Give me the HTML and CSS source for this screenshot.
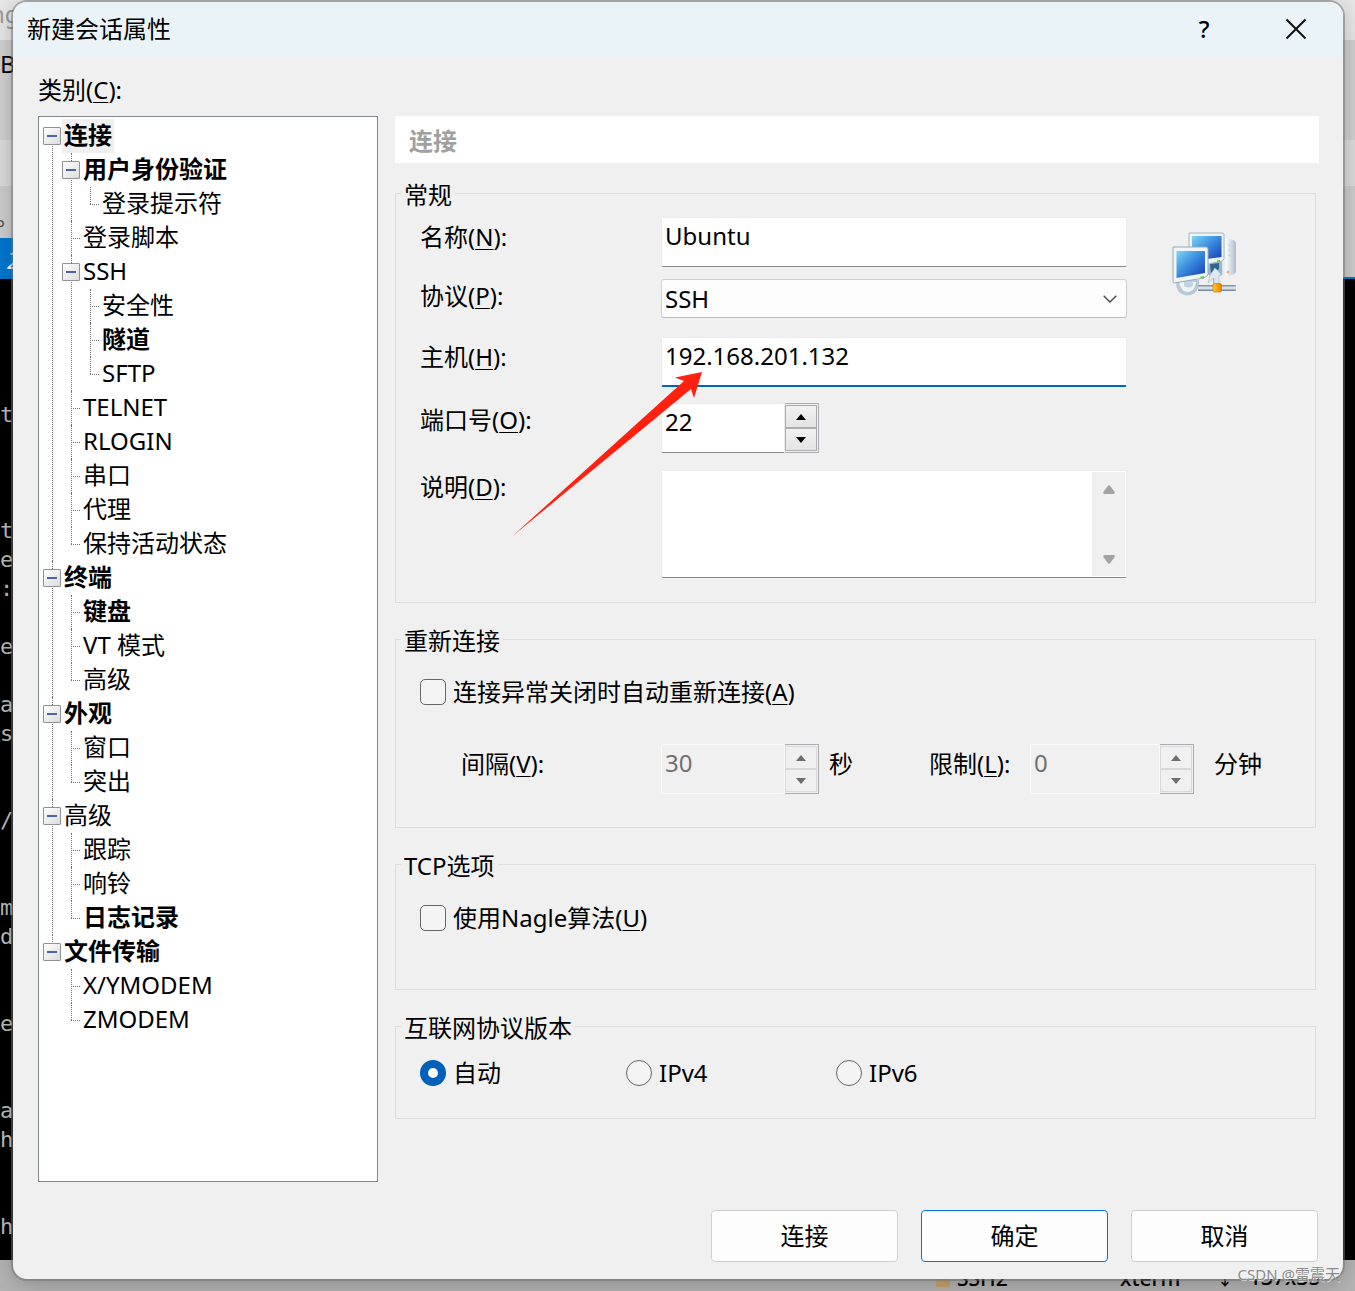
FILE: index.html
```html
<!DOCTYPE html>
<html lang="zh-CN">
<head>
<meta charset="utf-8">
<meta name="viewport" content="width=device-width, initial-scale=1">
<title>新建会话属性</title>
<link rel="stylesheet" href="styles.css">
</head>
<body>
<!-- Terminal application behind the dialog -->
<div class="backdrop" aria-hidden="true">
  <div class="band band-title">ng</div>
  <div class="band band-menu">B</div>
  <div class="band band-address"></div>
  <div class="band band-tools">°</div>
  <div class="band band-tabs"><span class="tab">2</span></div>
  <pre class="terminal">




t



t
e
:

e

a
s


/


m
d


e


a
h


h</pre>
  <div class="statusbar"><span class="lock"></span><span class="status-protocol">SSH2</span><span class="status-term">xterm</span><span class="status-size"><small>↕</small>137x35</span></div>
</div>

<main class="dialog" role="dialog" aria-labelledby="dialog-title">
  <header class="titlebar">
    <h1 id="dialog-title">新建会话属性</h1>
    <button type="button" class="title-button help" aria-label="帮助">?</button>
    <button type="button" class="title-button" aria-label="关闭">
      <svg width="22" height="22" viewBox="0 0 22 22"><path d="M1.500 1.500L20.500 20.500M20.500 1.500L1.500 20.500" fill="none" stroke="#111" stroke-width="2"/></svg>
    </button>
  </header>

  <div class="content">
    <p class="category-label">类别(<u>C</u>):</p>
    <div class="columns">
      <nav class="tree-box" aria-label="类别">
        <ul class="tree">
          <li>
            <div class="node strong"><button type="button" class="toggle" aria-label="折叠"></button><span class="selected">连接</span></div>
            <ul>
              <li>
                <div class="node strong"><button type="button" class="toggle" aria-label="折叠"></button><span>用户身份验证</span></div>
                <ul>
                  <li><div class="node"><span>登录提示符</span></div></li>
                </ul>
              </li>
              <li><div class="node"><span>登录脚本</span></div></li>
              <li>
                <div class="node"><button type="button" class="toggle" aria-label="折叠"></button><span>SSH</span></div>
                <ul>
                  <li><div class="node"><span>安全性</span></div></li>
                  <li><div class="node strong"><span>隧道</span></div></li>
                  <li><div class="node"><span>SFTP</span></div></li>
                </ul>
              </li>
              <li><div class="node"><span>TELNET</span></div></li>
              <li><div class="node"><span>RLOGIN</span></div></li>
              <li><div class="node"><span>串口</span></div></li>
              <li><div class="node"><span>代理</span></div></li>
              <li><div class="node"><span>保持活动状态</span></div></li>
            </ul>
          </li>
          <li>
            <div class="node strong"><button type="button" class="toggle" aria-label="折叠"></button><span>终端</span></div>
            <ul>
              <li><div class="node strong"><span>键盘</span></div></li>
              <li><div class="node"><span>VT 模式</span></div></li>
              <li><div class="node"><span>高级</span></div></li>
            </ul>
          </li>
          <li>
            <div class="node strong"><button type="button" class="toggle" aria-label="折叠"></button><span>外观</span></div>
            <ul>
              <li><div class="node"><span>窗口</span></div></li>
              <li><div class="node"><span>突出</span></div></li>
            </ul>
          </li>
          <li>
            <div class="node"><button type="button" class="toggle" aria-label="折叠"></button><span>高级</span></div>
            <ul>
              <li><div class="node"><span>跟踪</span></div></li>
              <li><div class="node"><span>响铃</span></div></li>
              <li><div class="node strong"><span>日志记录</span></div></li>
            </ul>
          </li>
          <li>
            <div class="node strong"><button type="button" class="toggle" aria-label="折叠"></button><span>文件传输</span></div>
            <ul>
              <li><div class="node"><span>X/YMODEM</span></div></li>
              <li><div class="node"><span>ZMODEM</span></div></li>
            </ul>
          </li>
        </ul>
      </nav>

      <section class="panel">
        <h2>连接</h2>
        <div class="groups">
          <fieldset class="group general">
            <legend>常规</legend>
            <div class="form">
              <label class="edit-label" for="name">名称(<u>N</u>):</label>
              <input class="edit" id="name" type="text" value="Ubuntu">

              <label for="protocol">协议(<u>P</u>):</label>
              <div class="combo">
                <select id="protocol"><option>SSH</option></select>
                <svg class="chevron" width="14" height="8" viewBox="0 0 14 8"><path d="M.7.7L7 7L13.300.7" fill="none" stroke="#444" stroke-width="1.300"/></svg>
              </div>

              <label class="edit-label" for="host">主机(<u>H</u>):</label>
              <div class="host">
                <input class="edit focused" id="host" type="text" value="192.168.201.132">
                <svg class="pointer-arrow" width="191" height="165" viewBox="0 0 191 165"><path d="M0 164.500L172 9L163 5.500L190 0L182 26L179 17Z" fill="#ff2010"/></svg>
              </div>

              <label for="port">端口号(<u>O</u>):</label>
              <div class="spin">
                <input class="edit" id="port" type="text" inputmode="numeric" value="22">
                <div class="spin-buttons">
                  <button type="button" aria-label="增加"><svg width="10" height="6" viewBox="0 0 10 6"><path d="M5 0L10 6H0Z"/></svg></button>
                  <button type="button" aria-label="减少"><svg width="10" height="6" viewBox="0 0 10 6"><path d="M0 0H10L5 6Z"/></svg></button>
                </div>
              </div>

              <label for="note">说明(<u>D</u>):</label>
              <div class="memo">
                <textarea id="note"></textarea>
                <div class="scroll">
                  <svg width="12" height="9" viewBox="0 0 12 9"><path d="M5 .8Q6-.5 7 .8L11.700 7Q12 9 10.500 9H1.500Q0 9 .3 7Z"/></svg>
                  <svg width="12" height="9" viewBox="0 0 12 9"><path d="M5 8.200Q6 9.500 7 8.200L11.700 2Q12 0 10.500 0H1.500Q0 0 .3 2Z"/></svg>
                </div>
              </div>
            </div>
            <svg class="network" width="66" height="66" viewBox="0 0 66 66">
              <defs>
                <linearGradient id="screen" x1="0" y1="0" x2="1" y2="1"><stop offset="0" stop-color="#7fd6f6"/><stop offset=".45" stop-color="#3e8fe0"/><stop offset="1" stop-color="#1238b4"/></linearGradient>
                <linearGradient id="case" x1="0" y1="0" x2="1" y2="0"><stop offset="0" stop-color="#b9cbda"/><stop offset=".5" stop-color="#f6fafc"/><stop offset="1" stop-color="#a9bccb"/></linearGradient>
                <linearGradient id="pipe" x1="0" y1="0" x2="0" y2="1"><stop offset="0" stop-color="#6e8499"/><stop offset=".5" stop-color="#eef4f8"/><stop offset="1" stop-color="#60768b"/></linearGradient>
                <linearGradient id="plug" x1="0" y1="0" x2="1" y2="0"><stop offset="0" stop-color="#ffd01a"/><stop offset="1" stop-color="#f07800"/></linearGradient>
              </defs>
              <path d="M51 5L61 8Q64 9 64 12V39Q64 41 62 42L53 45L45 42Z" fill="url(#case)"/>
              <path d="M56 13L60 14M56 18L60 19M56 23L60 24" stroke="#c4d3df"/>
              <circle cx="56" cy="40" r="1.500" fill="#f2a48e"/>
              <path d="M37 31L50 29V43L45 45V54H41V45L35 42Z" fill="#9cb4c8"/>
              <path d="M38 32L47 31V37L39 42Z" fill="#2f6492"/>
              <path d="M42 53V46L36 51L38 43L43 36L49 42L47 45V53Z" fill="#dce7ee" stroke="#a4b7c6" stroke-width=".6"/>
              <path d="M17 1H51L52 2V27L50 29L36 32L17 31Z" fill="#edf3f6" stroke="#a7b7c3"/>
              <path d="M20 4H49.500V25L20 29Z" fill="url(#screen)"/>
              <path d="M45 29.500L48 29" stroke="#5fd43a" stroke-width="2"/>
              <path d="M4 50Q4 62 15 63.500Q25 63 27 53V48H4Z" fill="#b8c9d6"/>
              <path d="M7 50Q9 60 16 60Q23 59 24 50Z" fill="#eef4f7"/>
              <path d="M12 48L21 47V54Q17 57 12 54Z" fill="#c3d4df"/>
              <rect x="26" y="53" width="38" height="6" rx="1" fill="url(#pipe)"/>
              <path d="M1 15H34Q36 15 36 17V43L32 46L2 51Q1 51 1 49Z" fill="#f0f5f7" stroke="#98abb9"/>
              <path d="M4.500 19H33V41L4.500 46Z" fill="url(#screen)"/>
              <path d="M28.500 45.500L32 45" stroke="#5fd43a" stroke-width="2"/>
              <rect x="41" y="51.500" width="8.500" height="8.500" rx="1.500" fill="url(#plug)" stroke="#c77a12" stroke-width=".7"/>
            </svg>
          </fieldset>

          <fieldset class="group reconnect">
            <legend>重新连接</legend>
            <label class="choice"><input type="checkbox"><span>连接异常关闭时自动重新连接(<u>A</u>)</span></label>
            <div class="timing">
              <label class="interval-label" for="interval">间隔(<u>V</u>):</label>
              <div class="spin">
                <input class="edit" id="interval" type="text" value="30" disabled>
                <div class="spin-buttons">
                  <button type="button" aria-label="增加" disabled><svg width="10" height="6" viewBox="0 0 10 6"><path d="M5 0L10 6H0Z"/></svg></button>
                  <button type="button" aria-label="减少" disabled><svg width="10" height="6" viewBox="0 0 10 6"><path d="M0 0H10L5 6Z"/></svg></button>
                </div>
              </div>
              <span class="seconds">秒</span>
              <label class="limit-label" for="limit">限制(<u>L</u>):</label>
              <div class="spin spin-limit">
                <input class="edit" id="limit" type="text" value="0" disabled>
                <div class="spin-buttons">
                  <button type="button" aria-label="增加" disabled><svg width="10" height="6" viewBox="0 0 10 6"><path d="M5 0L10 6H0Z"/></svg></button>
                  <button type="button" aria-label="减少" disabled><svg width="10" height="6" viewBox="0 0 10 6"><path d="M0 0H10L5 6Z"/></svg></button>
                </div>
              </div>
              <span class="minutes">分钟</span>
            </div>
          </fieldset>

          <fieldset class="group tcp">
            <legend>TCP选项</legend>
            <label class="choice"><input type="checkbox"><span>使用Nagle算法(<u>U</u>)</span></label>
          </fieldset>

          <fieldset class="group ip">
            <legend>互联网协议版本</legend>
            <div class="ip-options">
              <label class="choice"><input type="radio" name="ip" checked><span>自动</span></label>
              <label class="choice"><input type="radio" name="ip"><span>IPv4</span></label>
              <label class="choice"><input type="radio" name="ip"><span>IPv6</span></label>
            </div>
          </fieldset>
        </div>
      </section>
    </div>
  </div>

  <footer class="actions">
    <button type="button">连接</button>
    <button type="button" class="default">确定</button>
    <button type="button">取消</button>
  </footer>
</main>
<div class="watermark">CSDN @雷震天</div>
</body>
</html>
```
FILE: styles.css
```css
* { box-sizing: border-box; }

body {
  position: relative;
  min-height: 100vh;
  margin: 0;
  padding: 2px 12px 12px 13px;
  overflow-x: hidden;
  color: #000;
  font: 24px/32px "Noto Sans", "Noto Sans CJK SC", sans-serif;
}

h1, h2, p, ul, pre { margin: 0; padding: 0; font: inherit; }
button, input, select, textarea { margin: 0; font: inherit; color: inherit; }
button { padding: 0; }
svg { display: block; }
u { text-underline-offset: 3px; text-decoration-thickness: 1px; }

/* Application behind the dialog */
.backdrop {
  position: absolute;
  inset: 0;
  display: flex;
  flex-direction: column;
  overflow: hidden;
  background: #000;
}
.band { flex: none; overflow: hidden; }
.band-title { height: 40px; line-height: 28px; text-indent: -10px; background: #e8e8e8; color: #999; }
.band-menu { height: 100px; line-height: 48px; background: #d1d1d1; }
.band-address { height: 46px; background: #dcdcdc; }
.band-tools { height: 52px; line-height: 84px; text-indent: -5px; background: #cecece; color: #555; }
.band-tabs { height: 41px; background: #cecece; border-bottom: 2px solid #0078d0; }
.tab { display: block; width: 200px; height: 41px; padding-left: 7px; line-height: 44px; font-style: italic; background: #0078d0; color: #fff; }
.terminal {
  flex: 1;
  padding-top: 5px;
  font: 22px/29px "DejaVu Sans Mono", monospace;
  color: #bdbdbd;
}
.statusbar {
  display: flex;
  align-items: center;
  justify-content: flex-end;
  height: 31px;
  padding: 5px 40px 0 0;
  background: #b4b4b4;
  font-size: 21px;
  font-weight: 500;
  line-height: 38px;
}
.lock { width: 14px; height: 12px; margin: 6px 7px 0 0; background: #c9a46a; }
.status-protocol { width: 163px; }
.status-term { width: 97px; }
.status-size { width: 98px; white-space: nowrap; }
.status-size small { margin-right: 16px; font-size: 16px; }

/* Dialog */
.dialog {
  position: relative;
  display: flex;
  flex-direction: column;
  min-height: calc(100vh - 14px);
  overflow: hidden;
  border-radius: 14px;
  background: #f0f0f0;
  box-shadow: 0 0 0 2px rgba(112, 112, 112, .5), 0 4px 24px rgba(0, 0, 0, .25);
}
.titlebar {
  display: flex;
  align-items: center;
  height: 56px;
  padding: 0 1px 2px 14px;
  background: #eaf4f8;
}
.titlebar h1 { flex: 1; }
.title-button {
  display: grid;
  place-items: center;
  width: 92px;
  height: 54px;
  border: 0;
  background: none;
}
.help { font-weight: 500; }
.content { display: flex; flex: 1; flex-direction: column; padding: 16px 24px 0 25px; }
.category-label { margin-bottom: 10px; }
.columns { display: grid; flex: 1; grid-template-columns: 340px minmax(0, 1fr); gap: 17px; }

/* Category tree */
.tree-box { padding: 2px 4px; border: 1px solid #828790; background: #fff; }
.tree, .tree ul { list-style: none; }
.tree ul { padding-left: 19px; }
.tree li { position: relative; }
.tree li::before {
  content: "";
  position: absolute;
  top: 0;
  bottom: 0;
  left: 9px;
  border-left: 1px dotted #707070;
}
.tree > li:first-child::before { top: 17px; }
.tree li:last-child::before { bottom: auto; height: 17px; }
.node { display: flex; align-items: center; height: 34px; padding-left: 19px; }
.node::before {
  content: "";
  position: absolute;
  top: 17px;
  left: 9px;
  width: 9px;
  border-top: 1px dotted #707070;
}
.node span { padding: 0 2px 2px; line-height: 32px; white-space: nowrap; }
.strong { font-weight: 700; }
.node .selected { background: #f0f0f0; }
.toggle {
  position: relative;
  display: grid;
  place-items: center;
  width: 18px;
  height: 18px;
  margin-left: -19px;
  margin-right: 1px;
  border: 1px solid #919191;
  border-radius: 1px;
  background: linear-gradient(135deg, #fff, #dcdcdc);
}
.toggle::before { content: ""; width: 10px; height: 2px; background: #4a63ae; }

/* Settings panel */
.panel h2 { height: 47px; padding-left: 14px; line-height: 49px; font-weight: 700; background: #fff; color: #a0a0a0; }
.groups { display: flex; flex-direction: column; gap: 20px; padding: 14px 3px 0 0; }
.group { min-width: 0; margin: 0; padding: 0 24px; border: 1px solid #dcdcdc; }
.group legend { margin-left: -19px; padding: 4px 3px 0; line-height: 28px; }
.general { position: relative; padding: 8px 188px 24px 24px; }
.form {
  display: grid;
  grid-template-columns: 241px minmax(0, 1fr);
  grid-template-rows: 62px 58px 66px 67px 108px;
  align-items: start;
}
.form label { line-height: 34px; }
.form .edit-label { padding-top: 3px; }
.edit {
  display: block;
  width: 100%;
  height: 50px;
  padding: 0 3px 13px;
  border: 1px solid #ebebeb;
  border-bottom-color: #868686;
  border-radius: 2px;
  outline: 0;
  background: #fff;
}
.edit.focused { padding-bottom: 12px; border-bottom: 2px solid #0067c0; }
.edit:disabled { border-color: #fafafa; background: #f0f0f0; color: #707070; }
.combo { position: relative; }
.combo select {
  display: block;
  width: 100%;
  height: 39px;
  padding: 0 3px;
  border: 1px solid #d0d0d0;
  border-bottom-color: #bcbcbc;
  border-radius: 3px;
  appearance: none;
  background: #fdfdfd;
}
.chevron { position: absolute; top: 16px; right: 10px; pointer-events: none; }
.host { position: relative; }
.pointer-arrow { position: absolute; z-index: 1; top: 35px; left: -149px; pointer-events: none; }

.spin { display: flex; width: 158px; height: 50px; }
.spin .edit { flex: 1; min-width: 0; }
.spin-buttons {
  display: flex;
  flex-direction: column;
  width: 34px;
  padding: 1px 1px 1px 0;
  border: 1px solid #abadb3;
  border-left: 0;
}
.spin-buttons button {
  display: grid;
  flex: 1;
  place-items: center;
  border: 1px solid #acacac;
  background: linear-gradient(#f1f1f1, #e4e4e4);
}
.spin-buttons button:disabled { border-color: #d9d9d9; background: #f0f0f0; }
.spin-buttons button:disabled svg { fill: #6d6d6d; }

.memo {
  display: flex;
  height: 108px;
  border: 1px solid #ebebeb;
  border-bottom-color: #868686;
  border-radius: 2px;
  background: #fff;
}
.memo textarea { flex: 1; min-width: 0; padding: 4px; border: 0; outline: 0; resize: none; background: none; }
.scroll {
  display: flex;
  flex-direction: column;
  align-items: center;
  justify-content: space-between;
  width: 33px;
  margin: 1px 1px 1px 0;
  padding: 13px 0 12px;
  background: #f0f0f0;
}
.scroll svg { fill: #a3a3a3; }
.network { position: absolute; top: 23px; right: 77px; }

.choice { display: flex; align-items: center; gap: 7px; }
.choice input {
  flex: none;
  width: 26px;
  height: 26px;
  border: 1px solid #666;
  border-radius: 5px;
  appearance: none;
  background: #f4f4f4;
}
.choice input[type="radio"] { border-radius: 50%; }
.choice input[type="radio"]:checked { border: 8px solid #005fb8; background: #fff; }

.reconnect { padding-top: 21px; padding-bottom: 33px; }
.timing { display: flex; align-items: flex-start; padding: 36px 0 0 41px; line-height: 40px; white-space: nowrap; }
.interval-label { width: 200px; }
.seconds { width: 110px; padding-left: 10px; }
.limit-label { width: 101px; }
.spin-limit { width: 164px; }
.minutes { padding-left: 20px; }
.tcp { padding-top: 22px; padding-bottom: 55px; }
.ip { padding-top: 15px; padding-bottom: 29px; }
.ip-options { display: grid; grid-template-columns: 206px 210px auto; }

/* Dialog buttons */
.actions { display: flex; justify-content: flex-end; gap: 23px; padding: 28px 25px 17px; }
.actions button {
  width: 187px;
  height: 52px;
  border: 1px solid #d0d0d0;
  border-radius: 4px;
  background: #fdfdfd;
}
.actions .default { border-color: #0078d4; }

.watermark {
  position: absolute;
  right: 15px;
  bottom: 6px;
  font-size: 15px;
  line-height: 22px;
  color: #8a8a8a;
  text-shadow: 1px 1px 0 rgba(255, 255, 255, .6);
}
```
